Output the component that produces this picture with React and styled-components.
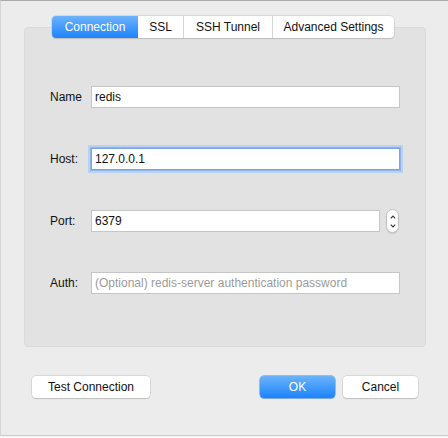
import React from 'react'
import styled, { createGlobalStyle } from 'styled-components'

const GlobalStyle = createGlobalStyle`
    * { box-sizing: border-box; }
    html, body {
        margin: 0;
        padding: 0;
        background: #f7f7f7;
    }
    body {
        font-family: "Liberation Sans", Arial, sans-serif;
        font-size: 12px;
        color: #222;
    }
`

const tabs = [
    { title: 'Connection', width: 86 },
    { title: 'SSL', width: 45 },
    { title: 'SSH Tunnel', width: 89 },
    { title: 'Advanced Settings', width: 122 },
]

const fields = [
    { id: 'name', label: 'Name', value: 'redis' },
    { id: 'host', label: 'Host:', value: '127.0.0.1', focused: true },
    { id: 'port', label: 'Port:', value: '6379', stepper: true },
    { id: 'auth', label: 'Auth:', placeholder: '(Optional) redis-server authentication password' },
]

function Stepper() {
    return (
        <StepperStyled>
            <svg width="6" height="4" viewBox="0 0 6 4">
                <path d="M0.8 3.3 L3 1 L5.2 3.3" fill="none" stroke="#333" strokeWidth="1.1" />
            </svg>
            <svg width="6" height="4" viewBox="0 0 6 4">
                <path d="M0.8 0.7 L3 3 L5.2 0.7" fill="none" stroke="#333" strokeWidth="1.1" />
            </svg>
        </StepperStyled>
    )
}

function App() {
    return (
        <>
            <GlobalStyle />
            <Window>
                <TabBar>
                    {tabs.map((t, i) => (
                        <Tab key={t.title} $active={i === 0} $width={t.width}>{t.title}</Tab>
                    ))}
                </TabBar>
                <GroupBox>
                    {fields.map((f) => (
                        <Row key={f.id}>
                            <Label>{f.label}</Label>
                            <Input
                                $focused={f.focused}
                                defaultValue={f.value}
                                placeholder={f.placeholder}
                                readOnly
                            />
                            {f.stepper && <Stepper />}
                        </Row>
                    ))}
                </GroupBox>
                <Footer>
                    <Button $width={118}>Test Connection</Button>
                    <Spacer />
                    <Button $width={75} $primary>OK</Button>
                    <Button $width={75}>Cancel</Button>
                </Footer>
            </Window>
        </>
    )
}

const Window = styled.div`
    width: 448px;
    height: 436px;
    background: #ececec;
    border-top: 1px solid #a9a9a9;
    border-left: 1px solid #d4d4d4;
    border-bottom: 1px solid #c9c9c9;
    padding: 15px 22px 0 23px;
    display: flex;
    flex-direction: column;
`

const TabBar = styled.div`
    display: flex;
    align-self: center;
    margin-left: -4px;
    height: 22px;
    position: relative;
    z-index: 1;
    border-radius: 4px;
    background: #fff;
    box-shadow: 0 0 0 0.5px #c4c4c4, 0 1px 1px rgba(0, 0, 0, 0.18);
`

const Tab = styled.div`
    width: ${(p) => p.$width}px;
    display: flex;
    align-items: center;
    justify-content: center;
    font-size: 12px;
    color: ${(p) => (p.$active ? '#fff' : '#111')};
    background: ${(p) => (p.$active ? 'linear-gradient(#6db3fb, #1d84fb)' : 'transparent')};
    border-left: ${(p) => (p.$active ? 'none' : '1px solid #d6d6d6')};
    &:first-child { border-radius: 4px 0 0 4px; }
    &:nth-child(2) { border-left: none; }
    &:last-child { border-radius: 0 4px 4px 0; }
`

const GroupBox = styled.div`
    margin-top: -11px;
    height: 320px;
    background: #e2e2e2;
    border: 1px solid #dadada;
    border-radius: 4px;
    padding: 58px 25px 0 25px;
    display: flex;
    flex-direction: column;
    gap: 40px;
`

const Row = styled.div`
    display: flex;
    align-items: center;
    height: 22px;
`

const Label = styled.span`
    width: 41px;
    flex: none;
    font-size: 12px;
    color: #111;
`

const Input = styled.input`
    flex: 1;
    min-width: 0;
    height: 22px;
    border: 1px solid #c6c6c6;
    border-top-color: #b9b9b9;
    background: #fff;
    padding: 0 3px;
    font-family: "Liberation Sans", Arial, sans-serif;
    font-size: 12px;
    color: #111;
    outline: none;
    box-shadow: ${(p) => (p.$focused ? '0 0 0 1px #8fb5e6, 0 0 0 3px #b7d2f3' : 'none')};
    border-color: ${(p) => (p.$focused ? '#7ea6d9' : '#c6c6c6')};
    &::placeholder {
        color: #9b9b9b;
    }
`

const StepperStyled = styled.div`
    flex: none;
    width: 13px;
    height: 24px;
    margin-left: 6px;
    margin-right: 1px;
    border-radius: 7px;
    background: #fff;
    border: 1px solid #c2c2c2;
    box-shadow: 0 1px 1px rgba(0, 0, 0, 0.12);
    display: flex;
    flex-direction: column;
    align-items: center;
    justify-content: center;
    gap: 5px;
`

const Footer = styled.div`
    display: flex;
    align-items: center;
    gap: 8px;
    margin-top: 29px;
    padding: 0 8px 0 8px;
`

const Spacer = styled.div`
    flex: 1;
`

const Button = styled.div`
    width: ${(p) => p.$width}px;
    height: 22px;
    display: flex;
    align-items: center;
    justify-content: center;
    border-radius: 4px;
    font-size: 12px;
    color: ${(p) => (p.$primary ? '#fff' : '#111')};
    background: ${(p) => (p.$primary ? 'linear-gradient(#6cb3fa, #1b83fb)' : '#fff')};
    box-shadow: ${(p) => (p.$primary
        ? '0 0 0 0.5px #3f8de6, 0 1px 1px rgba(0, 0, 0, 0.18)'
        : '0 0 0 0.5px #c4c4c4, 0 1px 1px rgba(0, 0, 0, 0.2)')};
`

export default App
